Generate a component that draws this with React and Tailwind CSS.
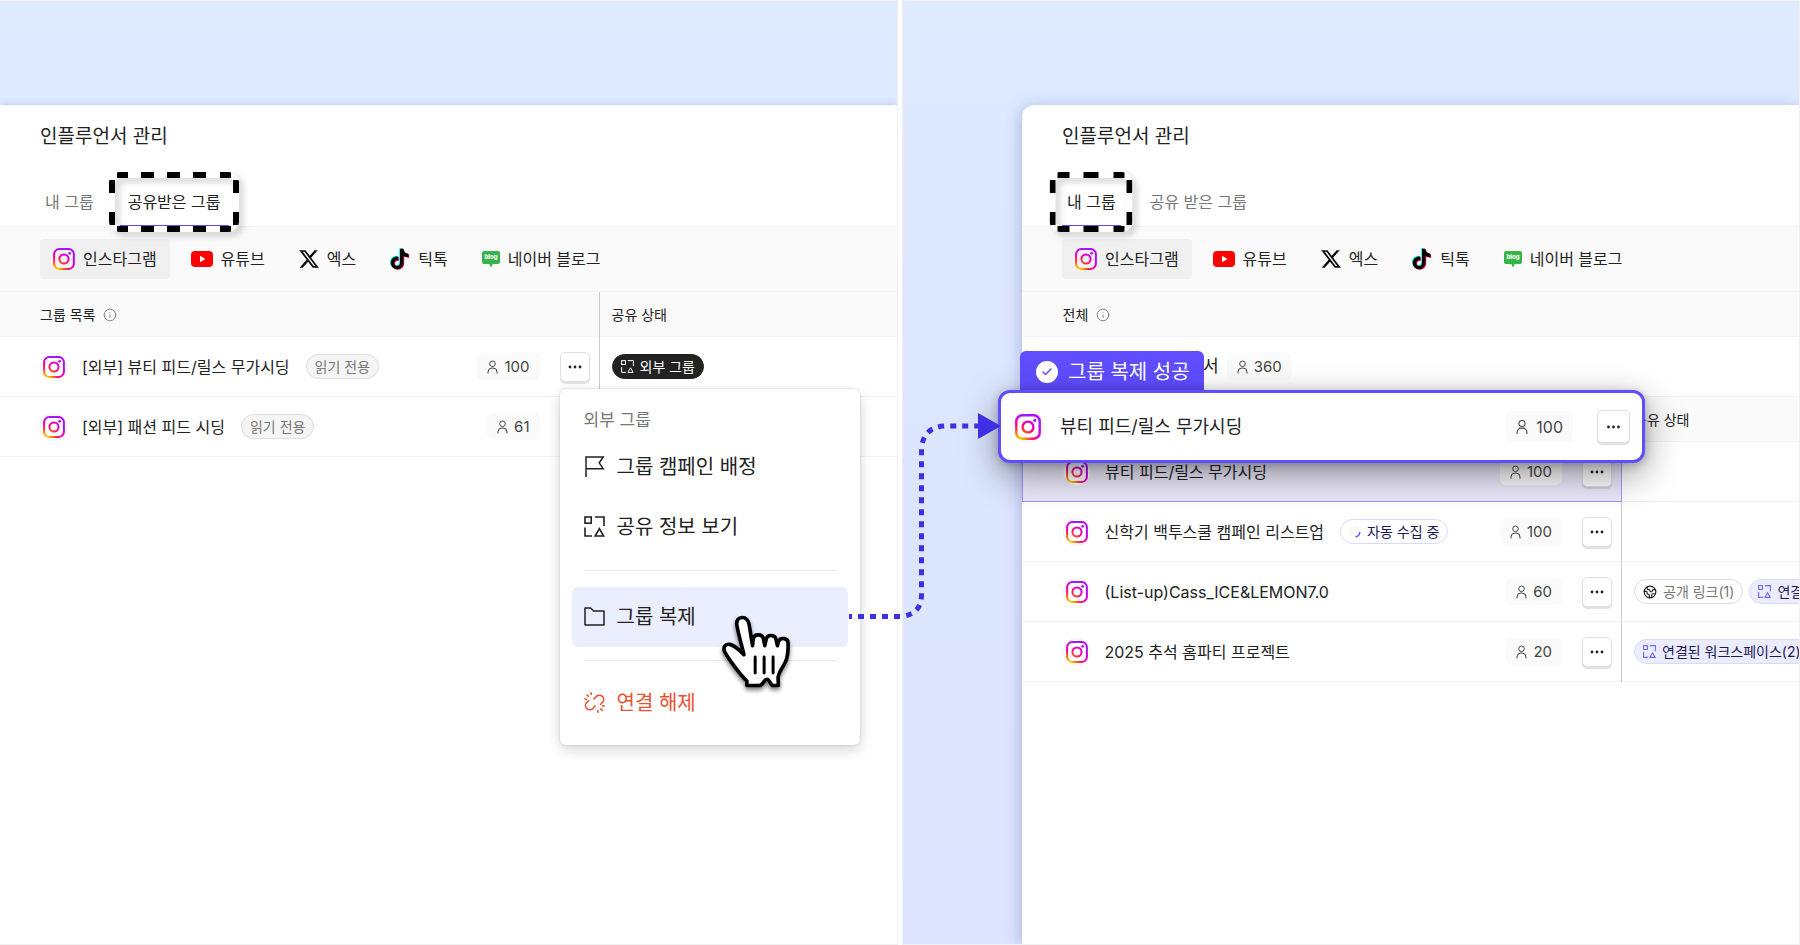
import { useId } from "react";
import { Check, Earth, Info } from "lucide-react";
import clsx from "clsx";

/* ---------- Icons ---------- */

function InstagramIcon({ className }) {
  const id = useId();
  return (
    <svg viewBox="0 0 24 24" fill="none" className={className} aria-hidden="true">
      <defs>
        <radialGradient id={id} gradientUnits="userSpaceOnUse" cx="4" cy="24" r="27">
          <stop offset="0" stopColor="#ffd600" />
          <stop offset="0.18" stopColor="#ff9a00" />
          <stop offset="0.36" stopColor="#ff3d3d" />
          <stop offset="0.55" stopColor="#ff0090" />
          <stop offset="0.78" stopColor="#c800f0" />
          <stop offset="0.9" stopColor="#9d1cff" />
          <stop offset="1" stopColor="#b400ff" />
        </radialGradient>
      </defs>
      <g stroke={`url(#${id})`} strokeWidth="2.2">
        <rect x="1.2" y="1.2" width="21.6" height="21.6" rx="5.6" />
        <circle cx="12" cy="12" r="5" />
      </g>
      <circle cx="18.2" cy="5.8" r="1.5" fill={`url(#${id})`} />
    </svg>
  );
}

function YoutubeIcon() {
  return (
    <svg viewBox="0 0 22 16" className="w-[22px] h-4" aria-hidden="true">
      <rect width="22" height="16" rx="4" fill="#ff0000" />
      <path d="M9 4.8 14.4 8 9 11.2z" fill="#fff" />
    </svg>
  );
}

function XIcon() {
  return (
    <svg viewBox="1 2 22 20" className="w-5 h-5" aria-hidden="true">
      <path
        fill="#0a0a0a"
        d="M18.244 2.25h3.308l-7.227 8.26 8.502 11.24H16.17l-5.214-6.817L4.99 21.75H1.68l7.73-8.835L1.254 2.25H8.08l4.713 6.231zm-1.161 17.52h1.833L7.084 4.126H5.117z"
      />
    </svg>
  );
}

const TIKTOK_PATH =
  "M12.525.02c1.31-.02 2.61-.01 3.91-.02.08 1.53.63 3.09 1.75 4.17 1.12 1.11 2.7 1.62 4.24 1.79v4.03c-1.44-.05-2.89-.35-4.2-.97-.57-.26-1.1-.59-1.62-.93-.01 2.92.01 5.84-.02 8.75-.08 1.4-.54 2.79-1.35 3.94-1.31 1.92-3.58 3.17-5.91 3.21-1.43.08-2.86-.31-4.08-1.03-2.02-1.19-3.44-3.37-3.65-5.71-.02-.5-.03-1-.01-1.49.18-1.9 1.12-3.72 2.58-4.96 1.66-1.44 3.98-2.13 6.15-1.72.02 1.48-.04 2.96-.04 4.44-.99-.32-2.15-.23-3.02.37-.63.41-1.11 1.04-1.36 1.75-.21.51-.15 1.07-.14 1.61.24 1.64 1.82 3.02 3.5 2.87 1.12-.01 2.19-.66 2.77-1.61.19-.33.4-.67.41-1.06.1-1.79.06-3.57.07-5.36.01-4.03-.01-8.05.02-12.07z";

function TiktokIcon() {
  return (
    <svg viewBox="1 -1 23 26" className="w-5 h-[22px]" aria-hidden="true">
      <path d={TIKTOK_PATH} fill="#00f2ea" transform="translate(-0.9 -0.7)" />
      <path d={TIKTOK_PATH} fill="#ff0050" transform="translate(0.9 0.7)" />
      <path d={TIKTOK_PATH} fill="#000" />
    </svg>
  );
}

function NaverBlogIcon() {
  return (
    <svg viewBox="0 0 18 17" className="w-[18px] h-[17px]" aria-hidden="true">
      <path
        fill="#35b44a"
        d="M2 0h14a2 2 0 0 1 2 2v9a2 2 0 0 1-2 2h-5.2L9 16.4 7.2 13H2a2 2 0 0 1-2-2V2a2 2 0 0 1 2-2z"
      />
      <text x="9" y="8.4" textAnchor="middle" fontSize="6" fontWeight="800" fill="#fff">
        blog
      </text>
    </svg>
  );
}

function UserIcon({ className }) {
  return (
    <svg viewBox="0 0 11 14" fill="none" stroke="currentColor" className={className} aria-hidden="true">
      <circle cx="5.5" cy="3.8" r="2.8" />
      <path d="M1 13.5V12a4 4 0 0 1 4-4h1a4 4 0 0 1 4 4v1.5" />
    </svg>
  );
}

function ShareIcon({ className, strokeWidth = 1.6 }) {
  return (
    <svg
      viewBox="0 0 21 21"
      fill="none"
      stroke="currentColor"
      strokeWidth={strokeWidth}
      className={className}
      aria-hidden="true"
    >
      <rect x="1" y="1" width="6.2" height="6.2" />
      <path d="M11 1H20v9M1 11.5V20h7" />
      <path d="M15.4 12.6 19.6 20h-8.4z" />
    </svg>
  );
}

function FlagIcon() {
  return (
    <svg viewBox="0 0 21 21" fill="none" stroke="currentColor" strokeWidth="1.5" className="w-[21px] h-[21px]" aria-hidden="true">
      <path d="M2 21V1h17.2l-4 5.8 4 5.9H2" />
    </svg>
  );
}

function FolderIcon() {
  return (
    <svg viewBox="0 0 21 21" fill="none" stroke="currentColor" strokeWidth="1.5" strokeLinejoin="round" className="w-[21px] h-[21px]" aria-hidden="true">
      <path d="M1 19V2h5.6l3 3H20v14z" />
    </svg>
  );
}

function UnlinkIcon() {
  return (
    <svg viewBox="0 0 21 21" fill="none" stroke="currentColor" strokeWidth="1.5" className="w-[21px] h-[21px]" aria-hidden="true">
      <path d="M9.5 7.5 12.3 4.4a4.3 4.3 0 0 1 6.1 0 4.3 4.3 0 0 1 0 6L16.2 12.8" />
      <path d="M5 8.2 2.7 10.6a4.3 4.3 0 0 0 0 6 4.3 4.3 0 0 0 6.1 0l2.7-3" />
      <path d="M.4 6.8l2.8.6M2.6 2.6l2.2 2.2M6.8.2l.6 2.8M20.6 14.2l-2.8-.6M18.6 18.6l-2.2-2.2M14.2 20.8l-.6-2.8" />
    </svg>
  );
}

function SpinnerIcon() {
  return (
    <svg viewBox="0 0 12 12" fill="none" className="w-3 h-3" aria-hidden="true">
      <circle cx="6" cy="6" r="4.8" stroke="#f0f0f4" />
      <path d="M10.8 6A4.8 4.8 0 0 1 6.5 10.8" stroke="#5f4dff" strokeWidth="1.5" />
    </svg>
  );
}

function HandCursor() {
  return (
    <svg
      viewBox="540 220 220 240"
      className="absolute z-10 left-[148px] top-[26px] w-[73px] h-20 drop-shadow-[0_3px_2px_rgba(0,0,0,0.5)]"
      aria-hidden="true"
    >
      <path
        d="M612 345C605 315 596 285 591 257C588 241 597 233 607 233C618 233 625 241 628 255L638 318L640 298C643 281 668 281 671 298L675 318L679 300C682 282 707 284 709 300L713 318L716 306C722 291 745 295 745 309C746 330 745 347 738 365C731 382 717 396 715 414L716 438H700C692 438 690 419 681 419C673 419 670 438 658 438H621V424C605 412 560 350 553 334C549 320 558 312 570 314C585 318 598 330 612 345Z"
        fill="#fff"
        stroke="#000"
        strokeWidth="11"
        strokeLinejoin="round"
      />
      <path d="M646 352v48M673 352v48M700 352v48" stroke="#000" strokeWidth="9" strokeLinecap="round" />
    </svg>
  );
}

/* Dashed marker around the active tab */
function TabMarker({ wide }) {
  const w = wide ? 130 : 83;
  const dashes = wide ? "11 13 13 13 13 13 13 14 11 200" : "12 14 15 15 12 200";
  const id = useId();
  return (
    <svg
      viewBox={`0 0 ${w} 60`}
      fill="none"
      className={clsx(
        "absolute z-10 -top-[7px] left-1/2 -translate-x-1/2 h-[60px] max-w-none pointer-events-none drop-shadow-[4px_4px_3px_rgba(0,0,0,0.18)]",
        wide ? "w-[130px]" : "w-[83px]"
      )}
      aria-hidden="true"
    >
      <clipPath id={id}>
        <rect width={w} height="60" rx="11" />
      </clipPath>
      <rect x="3" y="3" width={w - 6} height="54" rx="8" stroke="#fff" strokeWidth="6" />
      <g stroke="#000" strokeWidth="6" clipPath={`url(#${id})`}>
        <path d={`M8 3H${w - 8}M8 57H${w - 8}`} strokeDasharray={dashes} />
        <path d={`M3 8V53M${w - 3} 8V53`} strokeDasharray="13 19 13 200" />
      </g>
    </svg>
  );
}

/* Dotted connector from the menu item to the copied group */
function Connector() {
  return (
    <svg
      viewBox="0 0 156 210"
      fill="none"
      className="absolute z-30 top-[410px] -left-14 w-[156px] h-[210px] pointer-events-none"
      aria-hidden="true"
    >
      <path
        d="M2 205.5H53Q75 204 74.5 183V38Q76 16 98 15H132"
        stroke="#3f2fe4"
        strokeWidth="5"
        strokeDasharray="6 6"
        strokeDashoffset="3"
      />
      <path d="M131 2 154 15 131 28z" fill="#3f2fe4" />
    </svg>
  );
}

/* ---------- Small parts ---------- */

function Avatar({ large }) {
  return (
    <span
      className={clsx(
        "flex shrink-0 items-center justify-center rounded-full border border-[#f0f0f0] bg-white",
        large ? "w-8 h-8" : "w-7 h-7"
      )}
    >
      <InstagramIcon className={large ? "w-[26px] h-[26px] shrink-0" : "w-[22px] h-[22px] shrink-0"} />
    </span>
  );
}

function CountChip({ count, large }) {
  return (
    <span
      className={clsx(
        "flex items-center rounded-md bg-[#fafafa] text-[#444]",
        large ? "h-[31px] gap-2 px-2.5 text-base" : "h-[27px] gap-1.5 px-2.5 text-[15px]"
      )}
    >
      <UserIcon className={large ? "w-3 h-4" : "w-[11px] h-3.5"} />
      <span className={large ? "" : "pt-0.5"}>{count}</span>
    </span>
  );
}

function MoreButton({ large }) {
  return (
    <button
      type="button"
      aria-label="더보기"
      className={clsx(
        "flex items-center justify-center rounded-[5px] border border-[#e0e0e0] bg-white shadow-[0_2px_1px_rgba(0,0,0,0.12)]",
        large ? "w-[33px] h-[33px]" : "w-[30px] h-[30px]"
      )}
    >
      <svg viewBox="0 0 14 4" className={large ? "w-[15px] h-1" : "w-3.5 h-1"} fill="#222" aria-hidden="true">
        <circle cx="2" cy="2" r="1.4" />
        <circle cx="7" cy="2" r="1.4" />
        <circle cx="12" cy="2" r="1.4" />
      </svg>
    </button>
  );
}

function Pill({ icon, className, children }) {
  return (
    <span
      className={clsx(
        "flex h-[25px] shrink-0 items-center gap-1.5 whitespace-nowrap rounded-full border px-2 text-sm",
        className
      )}
    >
      {icon}
      {children}
    </span>
  );
}

function LinkedPill({ children }) {
  return (
    <Pill
      className="border-[#d5dbff] bg-[#ebedff] text-[#1e1757]"
      icon={<ShareIcon className="w-[13px] h-[13px] text-[#7668ff]" strokeWidth={1.8} />}
    >
      {children}
    </Pill>
  );
}

/* ---------- Page sections ---------- */

const PLATFORMS = [
  { label: "인스타그램", icon: <InstagramIcon className="w-[22px] h-[22px]" /> },
  { label: "유튜브", icon: <YoutubeIcon /> },
  { label: "엑스", icon: <XIcon /> },
  { label: "틱톡", icon: <TiktokIcon /> },
  { label: "네이버 블로그", icon: <NaverBlogIcon /> },
];

function PageHeader({ tabs, active, wideMarker }) {
  return (
    <>
      <h1 className="flex h-[62px] items-center px-10 pt-0.5 text-[19px]">인플루언서 관리</h1>
      <div role="tablist" className="flex h-[60px] items-end gap-[21px] border-b border-[#f2f2f2] px-10">
        {tabs.map((tab, i) => (
          <button
            key={tab}
            type="button"
            role="tab"
            aria-selected={i === active}
            className={clsx(
              "relative -mb-px h-12 border-b-2 text-base",
              i === 0 ? "px-[5px]" : "px-2",
              i === active ? "border-[#5f4dff]" : "border-transparent text-[#777]"
            )}
          >
            {tab}
            {i === active && <TabMarker wide={wideMarker} />}
          </button>
        ))}
      </div>
      <nav className="flex h-[65px] items-center gap-2 border-b border-[#f2f2f2] bg-[#fafafa] px-10">
        {PLATFORMS.map((platform, i) => (
          <button
            key={platform.label}
            type="button"
            className={clsx(
              "flex h-10 items-center gap-2 rounded-sm px-[13px] text-base",
              i === 0 && "bg-[#f0f0f0]"
            )}
          >
            {platform.icon}
            {platform.label}
          </button>
        ))}
      </nav>
    </>
  );
}

function HeadRow({ label, status, undivided }) {
  return (
    <tr className="border-b border-[#f2f2f2] bg-[#fafafa] text-left text-sm">
      <th className={clsx("w-[599px] p-0 font-normal", !undivided && "border-r border-[#ccc]")}>
        <div className="flex h-11 items-center gap-2 pl-10 pt-0.5">
          {label}
          <Info className="w-3.5 h-3.5 text-[#777]" strokeWidth={1.5} />
        </div>
      </th>
      <th className="p-0 pl-3 pt-0.5 font-normal">{status}</th>
    </tr>
  );
}

function GroupRow({ name, tag, count, selected, menu, children }) {
  return (
    <tr className="border-b border-[#f2f2f2]">
      <td
        className={clsx(
          "border-r p-0",
          selected ? "border border-[#a195ff] bg-[#ebe8fb]" : "border-[#ccc]"
        )}
      >
        <div className="flex h-[59px] items-center pl-10 pr-[9px]">
          <Avatar />
          <span className="ml-3.5 mr-4 whitespace-nowrap text-base">{name}</span>
          {tag}
          <div className="ml-auto flex items-center gap-5">
            <CountChip count={count} />
            <div className="relative">
              <MoreButton />
              {menu}
            </div>
          </div>
        </div>
      </td>
      <td className="max-w-0 p-0">
        <div className="flex items-center gap-1.5 pl-3">{children}</div>
      </td>
    </tr>
  );
}

function MenuItem({ icon, danger, active, children }) {
  return (
    <div className="relative">
      <button
        type="button"
        role="menuitem"
        className={clsx(
          "flex h-[60px] w-full items-center gap-3 rounded-md px-3 text-xl",
          active && "bg-[#ebeeff]",
          danger && "text-[#e8502f]"
        )}
      >
        {icon}
        {children}
      </button>
      {active && <HandCursor />}
    </div>
  );
}

function GroupMenu() {
  return (
    <div
      role="menu"
      className="absolute z-20 left-0 top-full mt-[7px] w-[300px] rounded-md bg-white p-3 shadow-[0_5px_14px_rgba(0,0,0,0.16),0_0_3px_rgba(0,0,0,0.14)]"
    >
      <p className="flex h-9 items-center px-3 pt-1 text-[17px] text-[#777]">외부 그룹</p>
      <MenuItem icon={<FlagIcon />}>그룹 캠페인 배정</MenuItem>
      <MenuItem icon={<ShareIcon className="w-[21px] h-[21px]" />}>공유 정보 보기</MenuItem>
      <hr className="mx-3 mt-[13px] mb-4 border-[#e8e8e8]" />
      <MenuItem icon={<FolderIcon />} active>
        그룹 복제
      </MenuItem>
      <hr className="mx-3 mt-[13px] mb-3 border-[#e8e8e8]" />
      <MenuItem icon={<UnlinkIcon />} danger>
        연결 해제
      </MenuItem>
    </div>
  );
}

function CopiedGroup() {
  return (
    <div className="absolute z-10 -left-6 top-[246px] w-[647px]">
      <div className="ml-[22px] flex h-10 w-fit items-center gap-2.5 rounded-t-md bg-[#5f4dff] pl-4 pr-3.5 pt-0.5 text-xl text-white">
        <span className="flex h-[22px] w-[22px] items-center justify-center rounded-full bg-white">
          <Check className="h-3 w-3 text-[#5f4dff]" strokeWidth={3} />
        </span>
        그룹 복제 성공
      </div>
      <div className="-mt-px flex h-[73px] items-center rounded-xl border-[3px] border-[#5f4dff] bg-white pl-[11px] pr-3 shadow-[0_12px_36px_rgba(0,0,0,0.4),0_2px_10px_rgba(0,0,0,0.22)]">
        <Avatar large />
        <span className="ml-4 text-lg">뷰티 피드/릴스 무가시딩</span>
        <div className="ml-auto flex items-center gap-6">
          <CountChip count={100} large />
          <MoreButton large />
        </div>
      </div>
    </div>
  );
}

function SharedGroups() {
  const readOnly = <Pill className="border-[#ddd] bg-[#f5f5f5] text-[#777]">읽기 전용</Pill>;
  return (
    <section className="flex min-w-0 flex-col overflow-hidden border border-l-0 border-[#f0f0f0] bg-linear-to-b from-[#deebff] via-[#dde7ff] via-30% to-[#dde4ff] pt-[104px]">
      <div className="flex-1 bg-white shadow-[0_0_6px_rgba(60,80,160,0.25)]">
        <PageHeader tabs={["내 그룹", "공유받은 그룹"]} active={1} wideMarker />
        <table className="w-full table-fixed border-collapse">
          <thead>
            <HeadRow label="그룹 목록" status="공유 상태" />
          </thead>
          <tbody>
            <GroupRow name="[외부] 뷰티 피드/릴스 무가시딩" tag={readOnly} count={100} menu={<GroupMenu />}>
              <Pill
                className="border-[#222] bg-[#222] text-white"
                icon={<ShareIcon className="w-[13px] h-[13px]" />}
              >
                외부 그룹
              </Pill>
            </GroupRow>
            <GroupRow name="[외부] 패션 피드 시딩" tag={readOnly} count={61} />
          </tbody>
        </table>
      </div>
    </section>
  );
}

function MyGroups() {
  return (
    <section className="relative flex min-w-0 flex-col border border-[#f0f0f0] bg-linear-to-b from-[#deebff] via-[#dde7ff] via-30% to-[#dde4ff] pl-[119px] pt-[104px]">
      <div className="relative flex flex-1 flex-col">
        <div className="flex-1 overflow-hidden rounded-tl-xl bg-white shadow-[-2px_2px_16px_rgba(60,70,150,0.28)] [clip-path:inset(-20px_0_0_-40px)]">
          <PageHeader tabs={["내 그룹", "공유 받은 그룹"]} active={0} />
          <table className="w-full table-fixed border-collapse">
            <thead>
              <HeadRow label="전체" undivided />
            </thead>
            <tbody>
              <tr className="border-b border-[#f2f2f2]">
                <td colSpan={2} className="p-0">
                  <div className="flex h-[59px] items-center pl-10">
                    <Avatar />
                    <span className="ml-3.5 mr-2 text-[17px]">전체 인플루언서</span>
                    <CountChip count={360} />
                  </div>
                </td>
              </tr>
              <HeadRow label="그룹 목록" status="공유 상태" />
              <GroupRow name="뷰티 피드/릴스 무가시딩" count={100} selected />
              <GroupRow
                name="신학기 백투스쿨 캠페인 리스트업"
                count={100}
                tag={
                  <Pill className="border-[#d5dbff] bg-white text-[#1e1757]" icon={<SpinnerIcon />}>
                    자동 수집 중
                  </Pill>
                }
              />
              <GroupRow name="(List-up)Cass_ICE&LEMON7.0" count={60}>
                <Pill
                  className="border-[#ddd] bg-white text-[#777]"
                  icon={<Earth className="w-3.5 h-3.5 text-[#222]" />}
                >
                  공개 링크(1)
                </Pill>
                <LinkedPill>연결된 워크스페이스(1)</LinkedPill>
              </GroupRow>
              <GroupRow name="2025 추석 홈파티 프로젝트" count={20}>
                <LinkedPill>연결된 워크스페이스(2)</LinkedPill>
              </GroupRow>
            </tbody>
          </table>
        </div>
        <CopiedGroup />
      </div>
      <Connector />
    </section>
  );
}

function App() {
  return (
    <main className="grid min-h-screen grid-cols-2 gap-1 overflow-hidden bg-white font-[Inter,'Noto_Sans_CJK_KR',sans-serif] text-[#222]">
      <SharedGroups />
      <MyGroups />
    </main>
  );
}

export default App;
